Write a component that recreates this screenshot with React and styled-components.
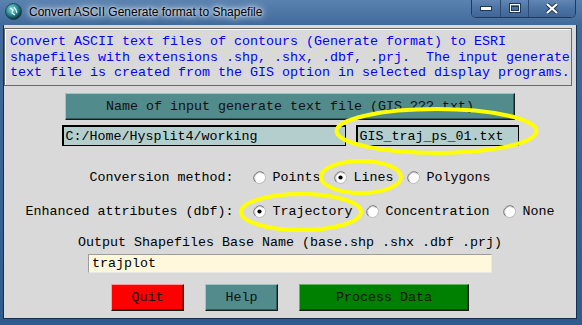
import React from "react";
import styled, { createGlobalStyle } from "styled-components";

const GlobalStyle = createGlobalStyle`
  html, body {
    margin: 0;
    padding: 0;
    background: #ffffff;
  }
`;

const mono = `"Liberation Mono", "Courier New", monospace`;

const Window = styled.div`
  position: relative;
  width: 582px;
  height: 325px;
  display: flex;
  flex-direction: column;
  background: linear-gradient(180deg, #5a82b0 0px, #416a9b 25px, #2f5b8e 100%);
  overflow: hidden;
`;

const TitleBar = styled.div`
  height: 25px;
  flex-shrink: 0;
  display: flex;
  align-items: flex-start;
  padding-left: 5px;
  padding-right: 6px;
`;

const AppIcon = styled.div`
  margin-top: 3px;
  width: 17px;
  height: 17px;
  flex-shrink: 0;
`;

const Title = styled.div`
  margin-left: 7px;
  margin-top: 4px;
  padding: 0 6px 0 0;
  font-family: "Liberation Sans", Arial, sans-serif;
  font-size: 12px;
  line-height: 16px;
  color: #000;
  text-shadow: 0 0 6px #e8eef6, 0 0 10px #dbe5f1, 0 0 3px #ffffff;
  flex: 1;
`;

const Controls = styled.div`
  display: flex;
  height: 18px;
  margin-top: -1px;
  border: 1px solid #203a5c;
  border-top: none;
  border-radius: 0 0 5px 5px;
  box-shadow: inset 0 0 0 1px rgba(200, 215, 235, 0.45);
  overflow: hidden;
`;

const CtlButton = styled.div`
  width: ${(p) => p.w}px;
  display: flex;
  align-items: center;
  justify-content: center;
  background: linear-gradient(180deg, #6589b6 0%, #4b72a3 55%, #3f6696 100%);
  border-left: ${(p) => (p.first ? "none" : "1px solid #2a4a72")};
`;

const Client = styled.div`
  flex: 1;
  margin: 0 5px 6px 3px;
  background: #d9d9d9;
  border: 1px solid #14304f;
  border-top: none;
  display: flex;
  flex-direction: column;
  align-items: center;
  font-family: ${mono};
  font-size: 13.33px;
  color: #000;
`;

const InfoBox = styled.div`
  align-self: stretch;
  margin: 3px 4px 0 0;
  height: 58px;
  box-sizing: border-box;
  padding: 5px 0 0 5px;
  border: 1px solid #6a6a6a;
  box-shadow: inset 1px 1px 0 #ffffff;
  color: #0000ff;
  line-height: 15.6px;
  white-space: pre;
`;

const RaisedButton = styled.div`
  box-sizing: border-box;
  width: ${(p) => p.w}px;
  height: 27px;
  display: flex;
  align-items: center;
  justify-content: center;
  background: ${(p) => p.bg};
  border: 1px solid;
  border-color: ${(p) => p.light} #1a1a1a #1a1a1a ${(p) => p.light};
  box-shadow: inset -1px -1px 0 rgba(0, 0, 0, 0.35);
  color: #111;
  white-space: pre;
`;

const FileButton = styled(RaisedButton)`
  margin-top: 7px;
`;

const EntryRow = styled.div`
  display: flex;
  gap: 10px;
  margin-top: 5px;
`;

const Entry = styled.div`
  box-sizing: border-box;
  width: ${(p) => p.w}px;
  height: 21px;
  padding-left: 2px;
  display: flex;
  align-items: center;
  background: #b4cdcd;
  border: 2px solid #000;
  border-right-width: 1px;
  border-bottom-width: 1px;
  white-space: pre;
`;

const OptionRow = styled.div`
  display: flex;
  align-items: center;
  height: 20px;
  margin-top: ${(p) => p.mt}px;
  white-space: pre;
`;

const RowLabel = styled.span`
  margin-right: 20px;
`;

const Option = styled.label`
  display: flex;
  align-items: center;
  margin-right: 14px;
  &:last-child {
    margin-right: 0;
  }
  svg {
    margin-right: 6px;
    flex-shrink: 0;
  }
`;

const OutputLabel = styled.div`
  margin-top: 14px;
  line-height: 16px;
  white-space: pre;
`;

const NameEntry = styled.div`
  box-sizing: border-box;
  width: 404px;
  height: 19px;
  margin-top: 3px;
  padding-left: 3px;
  display: flex;
  align-items: center;
  background: #fff8dc;
  border: 1px solid;
  border-color: #9c9c9c #e8e8e8 #e8e8e8 #9c9c9c;
`;

const ButtonRow = styled.div`
  display: flex;
  gap: 21px;
  margin-top: 11px;
`;

const Marks = styled.svg`
  position: absolute;
  left: 0;
  top: 0;
  pointer-events: none;
`;

const Radio = ({ checked }) => (
  <svg width="13" height="13" viewBox="0 0 13 13">
    <circle cx="6.5" cy="6.5" r="6" fill="#ffffff" stroke="#b8b8b8" />
    <path d="M2.3 10.7 A6 6 0 0 1 10.7 2.3" stroke="#6a6a6a" fill="none" />
    <path d="M3 9.9 A4.9 4.9 0 0 1 9.9 3" stroke="#d0d0d0" fill="none" />
    {checked ? <circle cx="6.5" cy="6.5" r="2.1" fill="#000" /> : null}
  </svg>
);

const RadioGroup = ({ label, options, value }) => (
  <>
    <RowLabel>{label}</RowLabel>
    {options.map((o) => (
      <Option key={o}>
        <Radio checked={o === value} />
        {o}
      </Option>
    ))}
  </>
);

const Globe = () => (
  <svg width="17" height="17" viewBox="0 0 17 17">
    <defs>
      <radialGradient id="gl" cx="40%" cy="35%" r="65%">
        <stop offset="0" stopColor="#8fe3e6" />
        <stop offset="0.55" stopColor="#2a8c94" />
        <stop offset="1" stopColor="#0d2f3a" />
      </radialGradient>
    </defs>
    <circle cx="8.5" cy="8.5" r="8" fill="url(#gl)" stroke="#173c4a" strokeWidth="0.8" />
    <path d="M5 5 L8 7 L7 10 L10 12 M9 4 L11 7 L12 10" stroke="#e8ffff" strokeWidth="1.1" fill="none" />
  </svg>
);

const App = () => (
  <>
    <GlobalStyle />
    <Window>
      <TitleBar>
        <AppIcon>
          <Globe />
        </AppIcon>
        <Title>Convert ASCII Generate format to Shapefile</Title>
        <Controls>
          <CtlButton w={28} first>
            <svg width="12" height="6" viewBox="0 0 12 6">
              <rect x="0.5" y="1.5" width="11" height="4" fill="#fff" stroke="#1e3554" />
            </svg>
          </CtlButton>
          <CtlButton w={27}>
            <svg width="12" height="10" viewBox="0 0 12 10">
              <rect x="0.5" y="0.5" width="11" height="9" fill="none" stroke="#1e3554" />
              <rect x="1.5" y="1.5" width="9" height="7" fill="none" stroke="#fff" strokeWidth="1" />
              <rect x="2.5" y="3.5" width="7" height="4" fill="none" stroke="#1e3554" />
            </svg>
          </CtlButton>
          <CtlButton w={46}>
            <svg width="14" height="11" viewBox="0 0 14 11">
              <path d="M2 1 L12 10 M12 1 L2 10" stroke="#1e3554" strokeWidth="4" />
              <path d="M2 1 L12 10 M12 1 L2 10" stroke="#fff" strokeWidth="2.2" />
            </svg>
          </CtlButton>
        </Controls>
      </TitleBar>

      <Client>
        <InfoBox>
          {"Convert ASCII text files of contours (Generate format) to ESRI\n"}
          {"shapefiles with extensions .shp, .shx, .dbf, .prj.  The input generate\n"}
          {"text file is created from the GIS option in selected display programs."}
        </InfoBox>

        <FileButton w={450} bg="#528b8b" light="#9fc4c4">
          Name of input generate text file (GIS_???.txt)
        </FileButton>

        <EntryRow>
          <Entry w={284}>C:/Home/Hysplit4/working</Entry>
          <Entry w={163}>GIS_traj_ps_01.txt</Entry>
        </EntryRow>

        <OptionRow mt={21}>
          <RadioGroup
            label="Conversion method:"
            options={["Points", "Lines", "Polygons"]}
            value="Lines"
          />
        </OptionRow>

        <OptionRow mt={14}>
          <RadioGroup
            label="Enhanced attributes (dbf):"
            options={["Trajectory", "Concentration", "None"]}
            value="Trajectory"
          />
        </OptionRow>

        <OutputLabel>Output Shapefiles Base Name (base.shp .shx .dbf .prj)</OutputLabel>
        <NameEntry>trajplot</NameEntry>

        <ButtonRow>
          <RaisedButton w={73} bg="#ff0000" light="#ff9a9a">Quit</RaisedButton>
          <RaisedButton w={73} bg="#528b8b" light="#9fc4c4">Help</RaisedButton>
          <RaisedButton w={170} bg="#008000" light="#5fb45f">Process Data</RaisedButton>
        </ButtonRow>
      </Client>

      <Marks width="582" height="325" viewBox="0 0 582 325">
        <g fill="none" stroke="#ffff00" strokeWidth="4">
          <ellipse cx="436.5" cy="131" rx="100" ry="22" />
          <ellipse cx="361" cy="177" rx="40" ry="16" />
          <ellipse cx="301" cy="212" rx="60" ry="18" />
        </g>
      </Marks>
    </Window>
  </>
);

export default App;
